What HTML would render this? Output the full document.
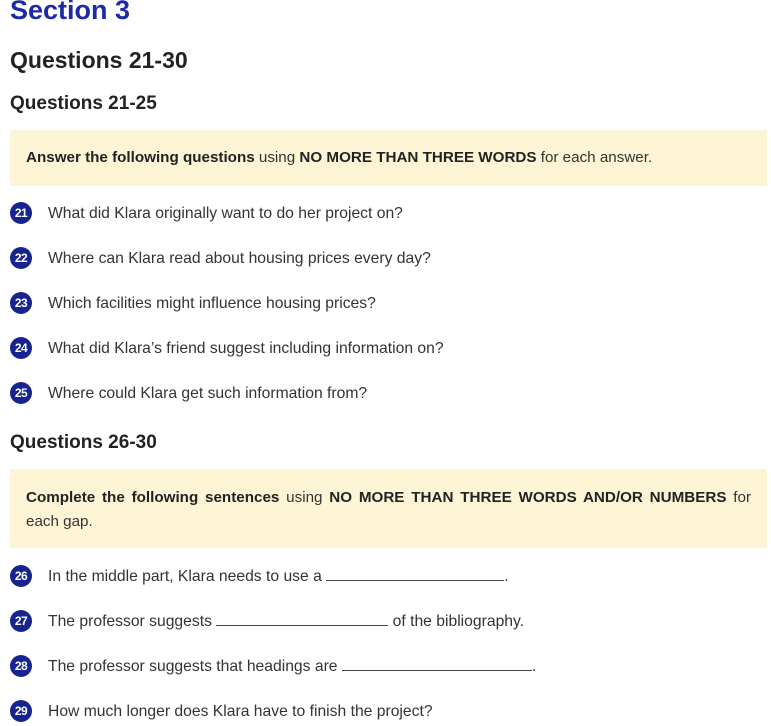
<!DOCTYPE html>
<html><head><meta charset="utf-8"><style>
body{margin:0;width:771px;height:726px;overflow:hidden;background:#fff;font-family:"Liberation Sans",sans-serif;color:#222;position:relative}
.a{position:absolute;white-space:nowrap}
h1{position:absolute;left:10px;top:-5px;margin:0;font-size:27px;color:#1b2aa8;font-weight:bold}
.h2{left:10px;font-size:23px;font-weight:bold;color:#222}
.h3{left:10px;font-size:19px;font-weight:bold;color:#222}
.box{position:absolute;left:10px;width:757px;background:#fdf4d6}
.bt{font-size:15.2px;line-height:24px;color:#333}
.bt b{color:#222}
.q{left:10px;height:22px;font-size:15.7px;color:#333;line-height:22px}
.c{position:absolute;left:0;top:0;width:22px;height:22px;border-radius:50%;background:#17248f;color:#fff;font-size:12px;font-weight:bold;text-align:center;line-height:22px;letter-spacing:-0.5px}
.t{position:absolute;left:38px;top:1px}
.u{display:inline-block;border-bottom:1px solid #444;height:14px;vertical-align:baseline}
</style></head><body>
<h1>Section 3</h1>
<div class="a h2" style="top:47px">Questions 21-30</div>
<div class="a h3" style="top:93px">Questions 21-25</div>
<div class="box" style="top:130px;height:56px"><div class="bt" style="position:absolute;left:16px;top:16px;white-space:nowrap"><b>Answer the following questions</b> using <b>NO MORE THAN THREE WORDS</b> for each answer.</div></div>
<div class="a q" style="top:202px"><span class="c">21</span><span class="t">What did Klara originally want to do her project on?</span></div>
<div class="a q" style="top:247px"><span class="c">22</span><span class="t">Where can Klara read about housing prices every day?</span></div>
<div class="a q" style="top:292px"><span class="c">23</span><span class="t">Which facilities might influence housing prices?</span></div>
<div class="a q" style="top:337px"><span class="c">24</span><span class="t">What did Klara’s friend suggest including information on?</span></div>
<div class="a q" style="top:382px"><span class="c">25</span><span class="t">Where could Klara get such information from?</span></div>
<div class="a h3" style="top:432px">Questions 26-30</div>
<div class="box" style="top:469px;height:79px"><div class="bt" style="position:absolute;left:16px;top:17px;right:16px;text-align:justify"><b>Complete the following sentences</b> using <b>NO MORE THAN THREE WORDS AND/OR NUMBERS</b> for each gap.</div></div>
<div class="a q" style="top:565px"><span class="c">26</span><span class="t">In the middle part, Klara needs to use a <span class="u" style="width:178px"></span>.</span></div>
<div class="a q" style="top:610px"><span class="c">27</span><span class="t">The professor suggests <span class="u" style="width:172px"></span> of the bibliography.</span></div>
<div class="a q" style="top:655px"><span class="c">28</span><span class="t">The professor suggests that headings are <span class="u" style="width:190px"></span>.</span></div>
<div class="a q" style="top:700px"><span class="c">29</span><span class="t">How much longer does Klara have to finish the project?</span></div>
</body></html>
